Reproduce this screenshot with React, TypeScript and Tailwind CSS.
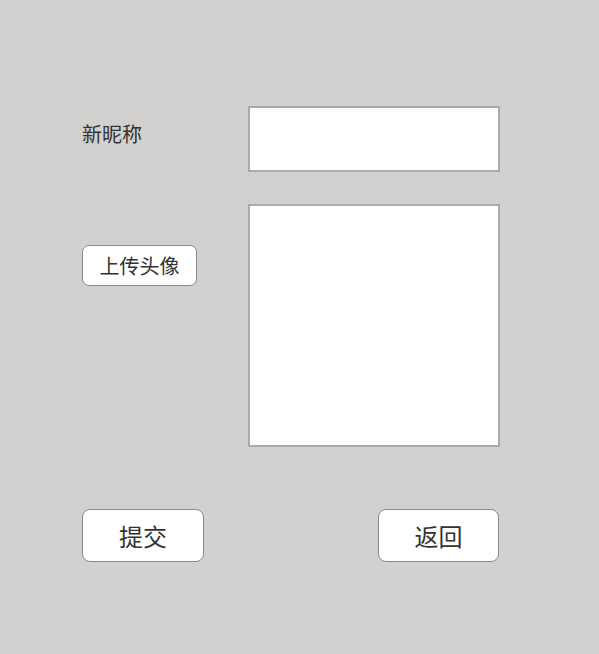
import React from 'react';

export default function App() {
  return (
    <div
      className="min-h-[654px] w-full bg-[#d2d1cf] text-[#333]"
      style={{ fontFamily: '"Noto Sans CJK SC", "Noto Sans", sans-serif' }}
    >
      <div className="pl-[82px] pt-[106px] w-[500px] box-content">
        {/* Nickname */}
        <div className="flex items-start">
          <label className="w-[166px] pt-[13px] text-[20px] leading-[30px]">新昵称</label>
          <input
            type="text"
            className="w-[252px] h-[66px] bg-white border-2 border-[#aaaaaa] outline-none"
          />
        </div>

        {/* Avatar */}
        <div className="flex items-start mt-[32px]">
          <div className="w-[166px] pt-[41px]">
            <button className="h-[41px] w-[115px] bg-white border border-[#8a8a8a] rounded-[7px] text-[20px] leading-none">
              上传头像
            </button>
          </div>
          <div className="w-[252px] h-[243px] bg-white border-2 border-[#aaaaaa]" />
        </div>

        {/* Actions */}
        <div className="flex justify-between w-[417px] mt-[62px]">
          <button className="h-[53px] w-[122px] bg-white border border-[#8a8a8a] rounded-[8px] text-[24px] leading-none">
            提交
          </button>
          <button className="h-[53px] w-[121px] bg-white border border-[#8a8a8a] rounded-[8px] text-[24px] leading-none">
            返回
          </button>
        </div>
      </div>
    </div>
  );
}
